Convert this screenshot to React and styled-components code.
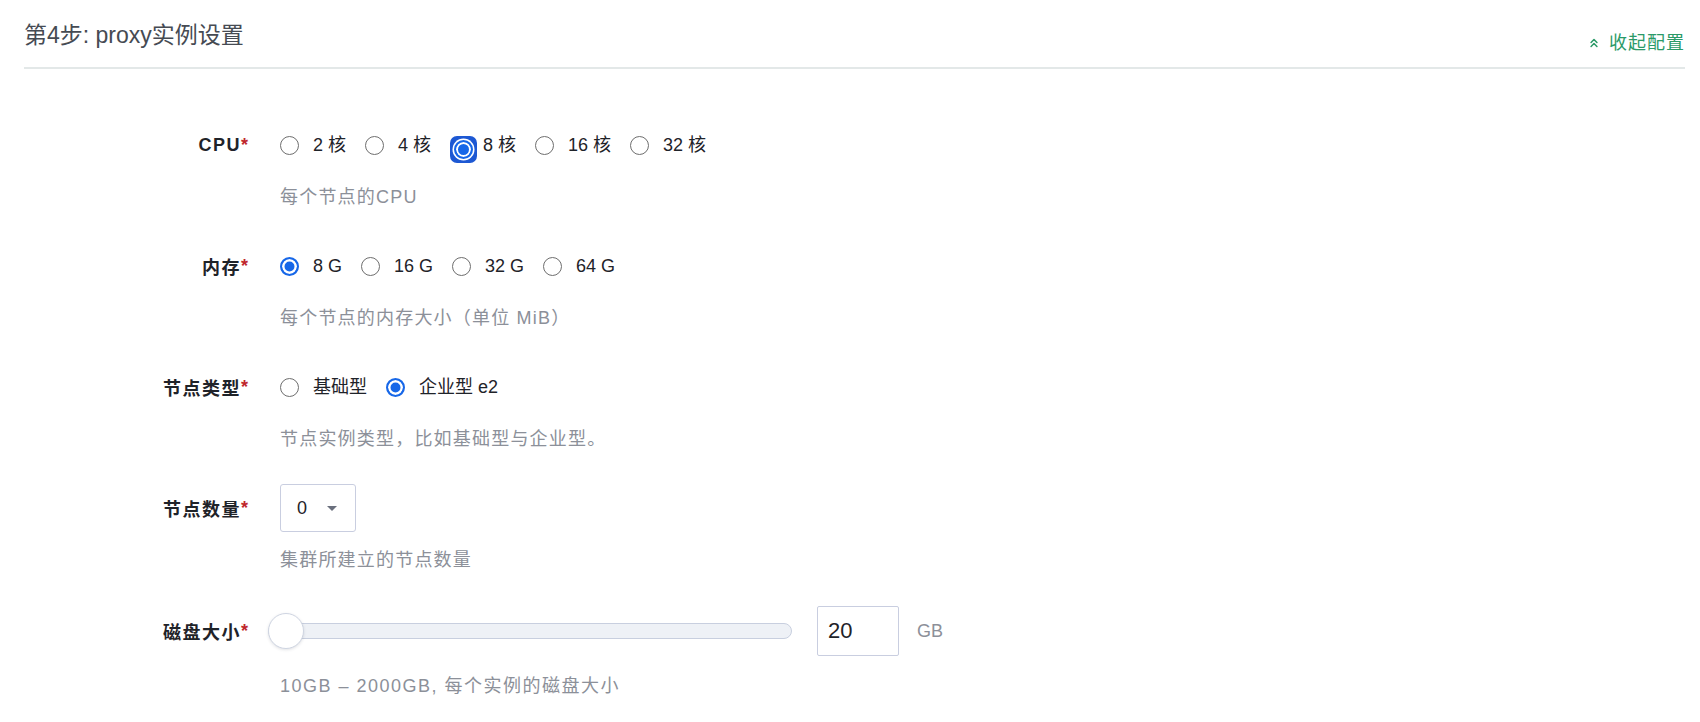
import React from "react";
import styled, { createGlobalStyle } from "styled-components";
import { ChevronsUp } from "lucide-react";

const FONT = `"Liberation Sans", "Noto Sans CJK SC", sans-serif`;

const cpuOptions = ["2 核", "4 核", "8 核", "16 核", "32 核"];
const memOptions = ["8 G", "16 G", "32 G", "64 G"];
const typeOptions = ["基础型", "企业型 e2"];

const App = () => {
  return (
    <Page>
      <GlobalStyle />
      <Header>
        <Title>第4步: proxy实例设置</Title>
        <Toggle>
          <ChevronsUp size={14} strokeWidth={2.6} />
          收起配置
        </Toggle>
      </Header>

      <Form>
        <Field label="CPU" help="每个节点的CPU">
          <RadioGroup options={cpuOptions} selected={2} focused />
        </Field>

        <Field label="内存" help="每个节点的内存大小（单位 MiB）">
          <RadioGroup options={memOptions} selected={0} />
        </Field>

        <Field label="节点类型" help="节点实例类型，比如基础型与企业型。">
          <RadioGroup options={typeOptions} selected={1} />
        </Field>

        <Field label="节点数量" help="集群所建立的节点数量">
          <Select>
            <span>0</span>
            <Caret />
          </Select>
        </Field>

        <Field label="磁盘大小" help="10GB – 2000GB, 每个实例的磁盘大小" tall>
          <Slider>
            <Track />
            <Thumb />
          </Slider>
          <NumberBox>20</NumberBox>
          <Unit>GB</Unit>
        </Field>
      </Form>
    </Page>
  );
};

const Field = ({ label, help, tall, children }) => (
  <Row $tall={tall}>
    <Label $tall={tall}>
      {label}
      <Required>*</Required>
    </Label>
    <Body>
      <Control $tall={tall}>{children}</Control>
      <Help $tall={tall}>{help}</Help>
    </Body>
  </Row>
);

const RadioGroup = ({ options, selected, focused }) => (
  <Options>
    {options.map((text, i) => (
      <Option key={text}>
        <RadioSlot>
          {i === selected && focused ? (
            <FocusRing>
              <Radio $checked $focused />
            </FocusRing>
          ) : (
            <Radio $checked={i === selected} />
          )}
        </RadioSlot>
        <OptionText>{text}</OptionText>
      </Option>
    ))}
  </Options>
);

export default App;

// STYLES

const GlobalStyle = createGlobalStyle`
  body {
    margin: 0;
    background: #ffffff;
    font-family: ${FONT};
  }
`;

const Page = styled.div`
  padding: 0 15px 0 24px;
  color: #1f2329;
  font-family: ${FONT};
`;

const Header = styled.div`
  display: flex;
  justify-content: space-between;
  align-items: flex-start;
  padding: 20px 0 12px;
  border-bottom: 2px solid #e3e8e8;
`;

const Title = styled.h2`
  margin: 0;
  font-size: 23px;
  line-height: 30px;
  font-weight: 400;
  color: #464b53;
`;

const Toggle = styled.a`
  display: flex;
  align-items: center;
  gap: 8px;
  margin-top: 11px;
  font-size: 18px;
  line-height: 24px;
  letter-spacing: 1px;
  color: #2b9a68;
  cursor: pointer;
`;

const Form = styled.div`
  display: flex;
  flex-direction: column;
  gap: 33px;
  padding-top: 52px;
`;

const Row = styled.div`
  display: grid;
  grid-template-columns: 224px 1fr;
  column-gap: 32px;
  margin-top: ${(p) => (p.$tall ? 1 : 0)}px;
`;

const Label = styled.div`
  height: ${(p) => (p.$tall ? 50 : 48)}px;
  display: flex;
  align-items: center;
  justify-content: flex-end;
  font-size: 18px;
  font-weight: 600;
  letter-spacing: 1.5px;
  color: #1f2329;
`;

const Required = styled.span`
  color: #c0272d;
  letter-spacing: 0;
`;

const Body = styled.div`
  display: flex;
  flex-direction: column;
`;

const Control = styled.div`
  min-height: ${(p) => (p.$tall ? 50 : 48)}px;
  display: flex;
  align-items: center;
`;

const Help = styled.div`
  margin-top: ${(p) => (p.$tall ? 18 : 16)}px;
  font-size: 18px;
  line-height: 24px;
  letter-spacing: ${(p) => (p.$tall ? 1.5 : 1.2)}px;
  color: #8c9099;
`;

const Options = styled.div`
  display: flex;
  align-items: center;
  gap: 19px;
`;

const Option = styled.label`
  display: flex;
  align-items: center;
  gap: 14px;
  cursor: pointer;
`;

const RadioSlot = styled.span`
  width: 19px;
  height: 19px;
  display: grid;
  place-items: center;
`;

const FocusRing = styled.span`
  width: 27px;
  height: 27px;
  flex: none;
  border-radius: 7px;
  background: #1d58d3;
  display: grid;
  place-items: center;
`;

const Radio = styled.span`
  box-sizing: border-box;
  width: 19px;
  height: 19px;
  border-radius: 50%;
  border: ${(p) => (p.$checked ? "2px solid #1767e8" : "1.5px solid #6e6e6e")};
  background: ${(p) => (p.$checked ? "#1767e8" : "#fff")};
  box-shadow: ${(p) =>
    p.$focused
      ? "inset 0 0 0 2px #fff, 0 0 0 1.5px #fff"
      : p.$checked
      ? "inset 0 0 0 2.5px #fff"
      : "none"};
`;

const OptionText = styled.span`
  font-size: 18px;
  line-height: 24px;
  color: #1f2329;
  white-space: pre;
`;

const Select = styled.div`
  box-sizing: border-box;
  width: 76px;
  height: 48px;
  display: flex;
  align-items: center;
  gap: 20px;
  padding-left: 16px;
  border: 1px solid #c9cee0;
  border-radius: 3px;
  font-size: 18px;
  color: #1f2329;
`;

const Caret = styled.span`
  width: 0;
  height: 0;
  border-left: 5px solid transparent;
  border-right: 5px solid transparent;
  border-top: 5px solid #6a6f7d;
`;

const Slider = styled.div`
  position: relative;
  width: 524px;
  height: 36px;
  margin-left: -12px;
  display: flex;
  align-items: center;
`;

const Track = styled.div`
  box-sizing: border-box;
  width: 100%;
  height: 16px;
  border-radius: 8px;
  background: #eef1f6;
  border: 1px solid #c8cfdf;
`;

const Thumb = styled.div`
  position: absolute;
  left: 0;
  top: 0;
  box-sizing: border-box;
  width: 36px;
  height: 36px;
  border-radius: 50%;
  background: #fff;
  border: 1.5px solid #cfd5e2;
  box-shadow: 0 1px 3px rgba(60, 70, 90, 0.15);
`;

const NumberBox = styled.div`
  box-sizing: border-box;
  width: 82px;
  height: 50px;
  margin-left: 25px;
  padding-left: 10px;
  display: flex;
  align-items: center;
  border: 1px solid #c9cee0;
  border-radius: 2px;
  font-size: 22px;
  color: #1f2329;
`;

const Unit = styled.span`
  margin-left: 18px;
  font-size: 18px;
  color: #8c9099;
`;
